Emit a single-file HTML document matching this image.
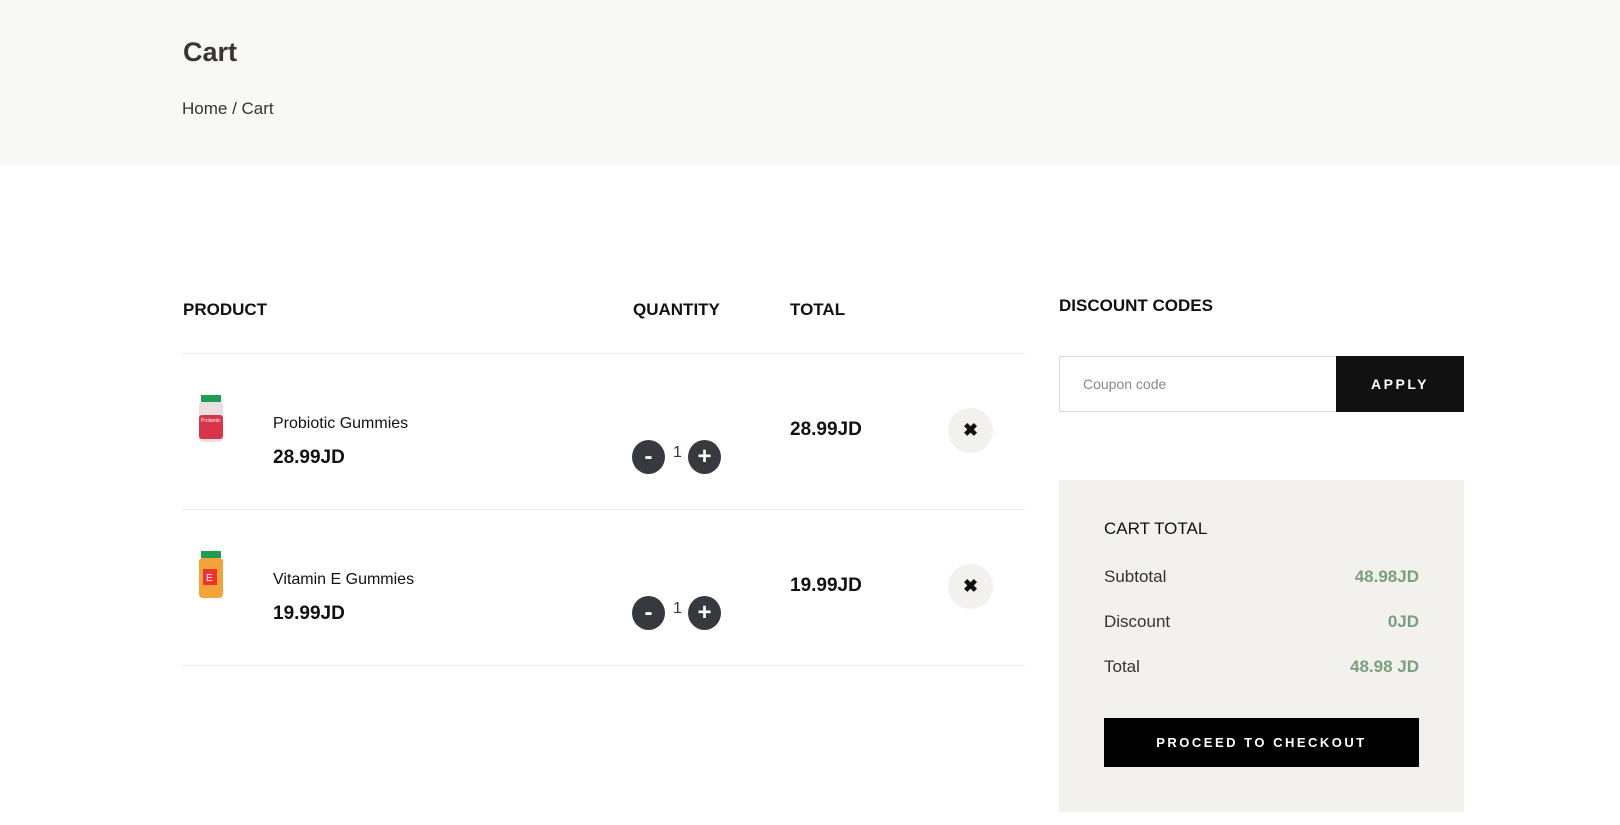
<!DOCTYPE html>
<html><head><meta charset="utf-8"><style>
*{margin:0;padding:0;box-sizing:border-box}
body{width:1620px;height:825px;background:#fff;font-family:"Liberation Sans",sans-serif;color:#111;position:relative;overflow:hidden}
.a{position:absolute;white-space:nowrap}
.hdr{position:absolute;left:0;top:0;width:1620px;height:165px;background:#f8f8f6}
.line{position:absolute;left:182px;width:843px;height:1px;background:#ececec}
.circ{position:absolute;width:33px;height:34px;border-radius:50%;background:#363a3f;color:#fff;font-weight:bold;text-align:center;line-height:34px;font-size:24px}
.x{position:absolute;width:45px;height:45px;border-radius:50%;background:#f2f1ee;text-align:center;line-height:45px;font-size:18px;font-weight:bold}
.b17{font-size:17px;font-weight:bold}
</style></head><body>
<div class="hdr"></div>
<div class="a" style="left:183px;top:37px;font-size:27px;font-weight:bold;color:#3a3530">Cart</div>
<div class="a" style="left:182px;top:99px;font-size:17px;color:#333">Home / Cart</div>

<div class="a b17" style="left:183px;top:300px">PRODUCT</div>
<div class="a b17" style="left:633px;top:300px">QUANTITY</div>
<div class="a b17" style="left:790px;top:300px">TOTAL</div>
<div class="line" style="top:353px"></div>
<div class="line" style="top:509px"></div>
<div class="line" style="top:665px"></div>

<!-- row1 -->
<svg class="a" style="left:197px;top:395px" width="28" height="48"><rect x="4" y="0" width="20" height="7" fill="#1f9d55"/><rect x="2" y="7" width="24" height="40" rx="4" fill="#e8e0e0"/><rect x="2" y="20" width="24" height="24" rx="3" fill="#d8344a"/><text x="4" y="27" font-size="5" fill="#fff">Probiotic</text></svg>
<div class="a" style="left:273px;top:415px;font-size:16px">Probiotic Gummies</div>
<div class="a" style="left:273px;top:447px;font-size:19px;font-weight:bold">28.99JD</div>
<div class="circ" style="left:632px;top:440px">-</div>
<div class="a" style="left:673px;top:444px;font-size:16px;color:#2a3b55">1</div>
<div class="circ" style="left:688px;top:440px">+</div>
<div class="a" style="left:790px;top:419px;font-size:19px;font-weight:bold">28.99JD</div>
<div class="x" style="left:948px;top:408px">&#10006;</div>

<!-- row2 -->
<svg class="a" style="left:197px;top:551px" width="28" height="48"><rect x="4" y="0" width="20" height="7" fill="#1f9d55"/><rect x="2" y="7" width="24" height="40" rx="4" fill="#f2a43a"/><rect x="6" y="18" width="14" height="16" fill="#e33"/><text x="9" y="30" font-size="10" fill="#fff">E</text></svg>
<div class="a" style="left:273px;top:571px;font-size:16px">Vitamin E Gummies</div>
<div class="a" style="left:273px;top:603px;font-size:19px;font-weight:bold">19.99JD</div>
<div class="circ" style="left:632px;top:596px">-</div>
<div class="a" style="left:673px;top:600px;font-size:16px;color:#2a3b55">1</div>
<div class="circ" style="left:688px;top:596px">+</div>
<div class="a" style="left:790px;top:575px;font-size:19px;font-weight:bold">19.99JD</div>
<div class="x" style="left:948px;top:564px">&#10006;</div>

<!-- right -->
<div class="a b17" style="left:1059px;top:296px">DISCOUNT CODES</div>
<div class="a" style="left:1059px;top:356px;width:278px;height:56px;border:1px solid #ddd;background:#fff"></div>
<div class="a" style="left:1083px;top:376px;font-size:14px;color:#888">Coupon code</div>
<div class="a" style="left:1336px;top:356px;width:128px;height:56px;background:#111;color:#fff;font-weight:bold;font-size:14px;letter-spacing:2.5px;text-align:center;line-height:56px">APPLY</div>

<div class="a" style="left:1059px;top:480px;width:405px;height:332px;background:#f2f1ee"></div>
<div class="a" style="left:1104px;top:519px;font-size:17px;color:#111">CART TOTAL</div>
<div class="a" style="left:1104px;top:567px;font-size:17px;color:#333">Subtotal</div>
<div class="a" style="left:1104px;top:612px;font-size:17px;color:#333">Discount</div>
<div class="a" style="left:1104px;top:657px;font-size:17px;color:#333">Total</div>
<div class="a" style="right:201px;top:567px;font-size:17px;font-weight:bold;color:#7a9f7e">48.98JD</div>
<div class="a" style="right:201px;top:612px;font-size:17px;font-weight:bold;color:#7a9f7e">0JD</div>
<div class="a" style="right:201px;top:657px;font-size:17px;font-weight:bold;color:#7a9f7e">48.98 JD</div>
<div class="a" style="left:1104px;top:718px;width:315px;height:49px;background:#000;color:#fff;font-weight:bold;font-size:13px;letter-spacing:2.5px;text-align:center;line-height:49px">PROCEED TO CHECKOUT</div>
</body></html>
